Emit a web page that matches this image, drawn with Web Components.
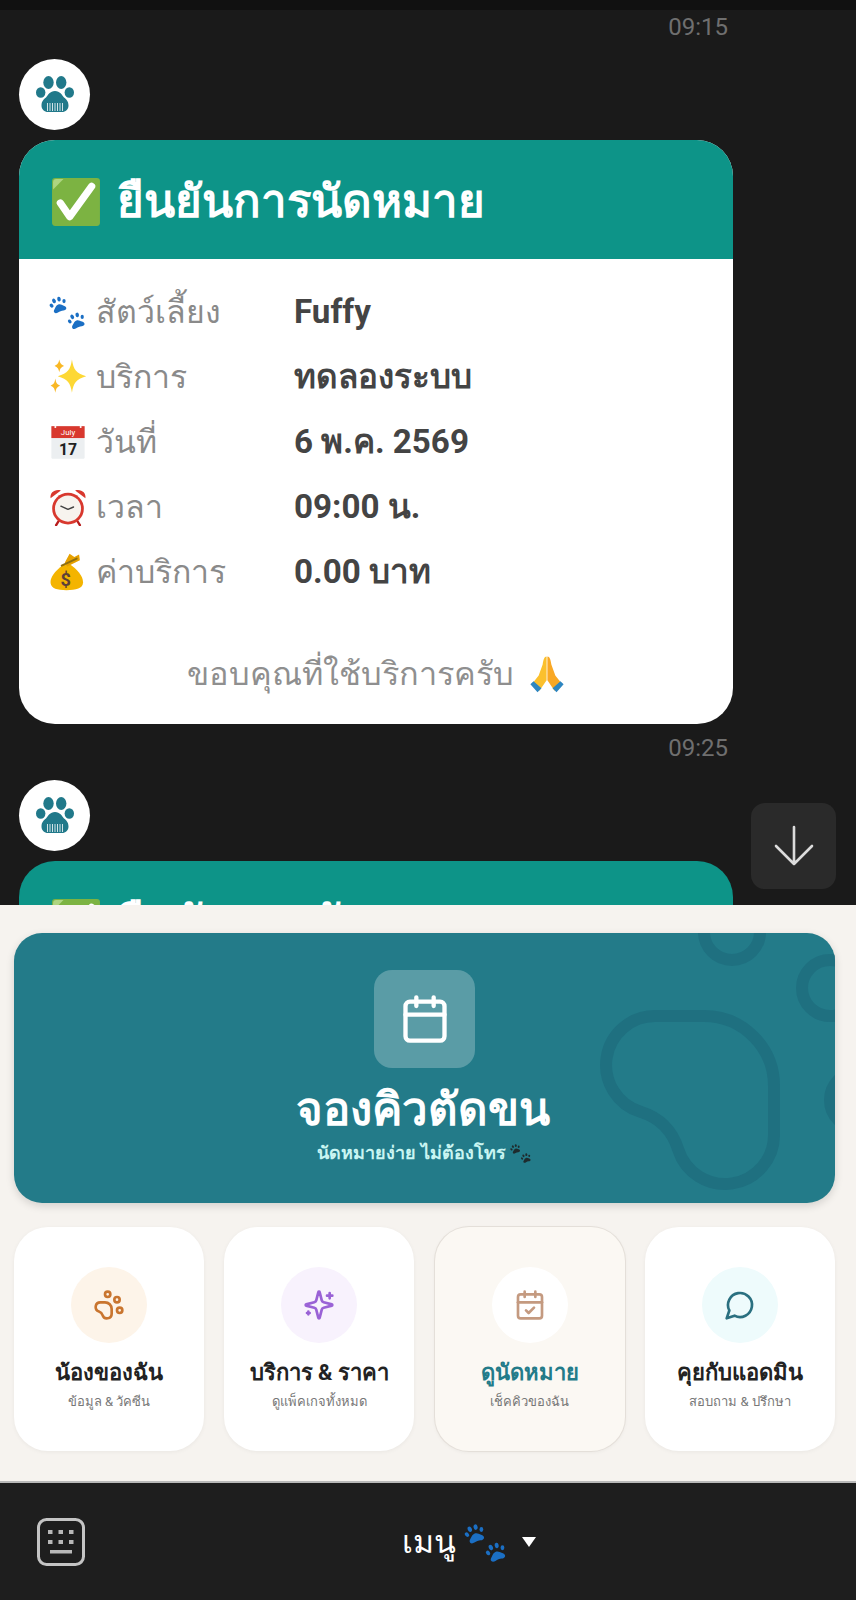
<!DOCTYPE html>
<html lang="th">
<head>
<meta charset="utf-8">
<title>แชท</title>
<style>
  html, body { margin: 0; padding: 0; background: #1a1a1a; }
  body { font-family: Roboto, "Noto Sans", "Noto Sans Thai", sans-serif; width: 856px; height: 1600px; overflow: hidden; }
</style>
</head>
<body>
<chat-screen>
  <chat-time>09:15</chat-time>
  <bot-avatar></bot-avatar>
  <confirm-card heading="ยืนยันการนัดหมาย" thanks="ขอบคุณที่ใช้บริการครับ">
    <info-row icon="paws" label="สัตว์เลี้ยง" value="Fuffy"></info-row>
    <info-row icon="sparkles" label="บริการ" value="ทดลองระบบ"></info-row>
    <info-row icon="calendar" label="วันที่" value="6 พ.ค. 2569"></info-row>
    <info-row icon="clock" label="เวลา" value="09:00 น."></info-row>
    <info-row icon="money" label="ค่าบริการ" value="0.00 บาท"></info-row>
  </confirm-card>
  <chat-time>09:25</chat-time>
  <bot-avatar></bot-avatar>
  <confirm-card heading="ยืนยันการนัดหมาย"></confirm-card>
</chat-screen>
<rich-menu>
  <booking-banner heading="จองคิวตัดขน" sub="นัดหมายง่าย ไม่ต้องโทร"></booking-banner>
  <tile-grid>
    <menu-tile icon="paw" tone="#c9752f" bubble="#fdf4e9" heading="น้องของฉัน" sub="ข้อมูล &amp; วัคซีน"></menu-tile>
    <menu-tile icon="sparkles" tone="#9a62d6" bubble="#f8f2fd" heading="บริการ &amp; ราคา" sub="ดูแพ็คเกจทั้งหมด"></menu-tile>
    <menu-tile active icon="check" tone="#c49a80" bubble="#ffffff" heading="ดูนัดหมาย" sub="เช็คคิวของฉัน"></menu-tile>
    <menu-tile icon="chat" tone="#2a7080" bubble="#eefbfc" heading="คุยกับแอดมิน" sub="สอบถาม &amp; ปรึกษา"></menu-tile>
  </tile-grid>
</rich-menu>
<chat-bar></chat-bar>

<script>
const PAW = `<path d="M13 13c3.500 0 5 2.500 7.500 4.500 2 1.500 3 3.200 2.300 5-.8 2-3.300 2.300-5.300 1.800-3-.8-6-.8-9 0-2 .5-4.500.2-5.300-1.800-.7-1.800.3-3.500 2.300-5C8 15.500 9.500 13 13 13z"/><ellipse cx="2.800" cy="11" rx="2.500" ry="3.300" transform="rotate(-20 2.800 11)"/><ellipse cx="8.800" cy="5.500" rx="2.700" ry="3.700" transform="rotate(-8 8.800 5.500)"/><ellipse cx="17" cy="5.500" rx="2.700" ry="3.700" transform="rotate(8 17 5.500)"/><ellipse cx="23.200" cy="11" rx="2.500" ry="3.300" transform="rotate(20 23.200 11)"/>`;

const EMOJI = {
  check: `<rect x="1" y="1" width="46" height="46" rx="3" fill="#7cb342"/><path d="M2 12V5a3 3 0 0 1 3-3h7z" fill="#aed581"/><path d="M9 25l9 13L39 9" fill="none" stroke="#fff" stroke-width="7" stroke-linecap="round" stroke-linejoin="round"/>`,
  paws: `<g fill="#1b6fc4"><g transform="translate(1 4) scale(.82) rotate(-20 13 13)">${PAW}</g><g transform="translate(24 24) scale(.82) rotate(-20 13 13)">${PAW}</g></g>`,
  sparkles: `<g fill="#fdd835"><path d="M29 2c2 13 5 17 18 21-13 4-16 8-18 21-2-13-5-17-18-21 13-4 16-8 18-21z"/><path d="M13 2c1 5 2 6 6 8-4 2-5 3-6 8-1-5-2-6-6-8 4-2 5-3 6-8z" fill="#f9b825"/><path d="M8 26c1 6 2 7 6 9-4 2-5 3-6 9-1-6-2-7-6-9 4-2 5-3 6-9z" fill="#f9b825"/></g>`,
  calendar: `<rect x="3" y="4" width="42" height="41" rx="1" fill="#eceff1"/><rect x="3" y="4" width="42" height="15" fill="#d8382e"/><circle cx="8" cy="5" r="1.300" fill="#fff"/><circle cx="40" cy="5" r="1.300" fill="#fff"/><text x="24" y="15" font-family="Roboto, sans-serif" font-size="10" fill="#fff" text-anchor="middle">July</text><text x="24" y="40" font-family="Roboto, sans-serif" font-size="20" font-weight="700" fill="#212121" text-anchor="middle">17</text>`,
  clock: `<path d="M2 13C1 6 7 1 15 3zM46 13c1-7-5-12-13-10z" fill="#d8382e"/><path d="M12 42l-3 5M36 42l3 5" stroke="#b71c1c" stroke-width="3" stroke-linecap="round"/><circle cx="24" cy="26" r="20" fill="#d8382e"/><circle cx="24" cy="26" r="16.500" fill="#f7f3ee"/><path d="M24 27l-9-4M24 27l7-3" stroke="#424242" stroke-width="1.800" stroke-linecap="round"/>`,
  money: `<path d="M18 15C7 23 1 31 2 38c1 7 8 9 20 9 12 0 21-2 21-10 0-8-8-17-17-23z" fill="#f4b400"/><path d="M20 12l6-11 6 4 6-3 1 7-16 8z" fill="#e6a100"/><path d="M16 16l19-9" stroke="#8d6e10" stroke-width="2.400" stroke-linecap="round"/><text x="21" y="42" font-family="Roboto, sans-serif" font-size="23" font-weight="700" fill="#5d4037" text-anchor="middle">$</text>`,
  pray: `<path d="M23.500 2c-3 0-4 4-5 10l-5 14-8 10 9 9 9-13z" fill="#fbc02d"/><path d="M24.500 2c3 0 4 4 5 10l5 14 8 10-9 9-9-13z" fill="#f9a825"/><path d="M3 37l4-4 10 9-5 5zM45 37l-4-4-10 9 5 5z" fill="#2e86c1"/>`
};

// colour pictures that the font set can't give; always a 48 unit box
class EmojiIcon extends HTMLElement {
  connectedCallback() {
    const size = this.getAttribute('size') || 40;
    this.attachShadow({mode: 'open'}).innerHTML = `
    <style>:host { display: inline-flex; flex: none; width: ${size}px; height: ${size}px; } svg { width: 100%; height: 100%; display: block; }</style>
    <svg viewBox="0 0 48 48">${EMOJI[this.getAttribute('name')] || ''}</svg>`;
  }
}
customElements.define('emoji-icon', EmojiIcon);

const LUCIDE = {
  calendar: `<path d="M8 2v4M16 2v4"/><rect x="3" y="4" width="18" height="18" rx="2"/><path d="M3 10h18"/>`,
  check: `<path d="M8 2v4M16 2v4"/><rect x="3" y="4" width="18" height="18" rx="2"/><path d="M3 10h18"/><path d="m9 16 2 2 4-4"/>`,
  paw: `<circle cx="11" cy="4" r="2"/><circle cx="18" cy="8" r="2"/><circle cx="20" cy="16" r="2"/><path d="M9 10a5 5 0 0 1 5 5v3.5a3.5 3.5 0 0 1-6.84 1.045Q6.52 17.48 4.46 16.84A3.5 3.5 0 0 1 5.5 10Z"/>`,
  sparkles: `<path d="M9.937 15.5A2 2 0 0 0 8.5 14.063l-6.135-1.582a.5.5 0 0 1 0-.962L8.5 9.936A2 2 0 0 0 9.937 8.5l1.582-6.135a.5.5 0 0 1 .963 0L14.063 8.5A2 2 0 0 0 15.5 9.937l6.135 1.581a.5.5 0 0 1 0 .964L15.5 14.063a2 2 0 0 0-1.437 1.437l-1.582 6.135a.5.5 0 0 1-.963 0z"/><path d="M20 3v4M22 5h-4M4 17v2M5 18H3"/>`,
  chat: `<path d="M7.900 20A9 9 0 1 0 4 16.100L2 22Z"/>`
};

class ChatScreen extends HTMLElement {
  constructor() {
    super();
    this.attachShadow({mode: 'open'}).innerHTML = `
    <style>
      :host { display: block; position: relative; height: 905px; overflow: hidden; background: #1a1a1a; border-top: 10px solid #111; box-sizing: border-box; }
      .list { display: flex; flex-direction: column; padding: 0 123px 0 19px; }
      .down { position: absolute; right: 20px; top: 793px; width: 85px; height: 86px; border-radius: 14px; background: #2a2a2a; display: flex; align-items: center; justify-content: center; }
      .down svg { width: 46px; height: 46px; fill: none; stroke: #dcdcdc; stroke-width: 2.600; stroke-linecap: round; stroke-linejoin: round; }
    </style>
    <div class="list"><slot></slot></div>
    <div class="down"><svg viewBox="0 0 46 46"><path d="M23 4v37M5 23l18 18 18-18"/></svg></div>`;
  }
}
customElements.define('chat-screen', ChatScreen);

class ChatTime extends HTMLElement {
  constructor() {
    super();
    this.attachShadow({mode: 'open'}).innerHTML = `
    <style>:host { display: block; text-align: right; font: 400 24px/32px Roboto, sans-serif; color: #6f6f6f; padding-top: 1px; margin-bottom: 16px; margin-right: 5px; }</style>
    <slot></slot>`;
  }
}
customElements.define('chat-time', ChatTime);

class BotAvatar extends HTMLElement {
  constructor() {
    super();
    this.attachShadow({mode: 'open'}).innerHTML = `
    <style>
      :host { display: flex; align-items: center; justify-content: center; width: 71px; height: 71px; border-radius: 50%; background: #fff; margin-bottom: 10px; }
      svg { width: 38px; height: 37px; fill: #21798a; }
    </style>
    <svg viewBox="0 0 38 37">
      <ellipse cx="12.500" cy="6.500" rx="5.200" ry="6.500"/><ellipse cx="25.200" cy="6.500" rx="5.200" ry="6.500"/>
      <ellipse cx="4.700" cy="16.500" rx="4.700" ry="5.300"/><ellipse cx="33.300" cy="16.500" rx="4.700" ry="5.300"/>
      <path d="M19 15c5 0 7 4 9 6.500 2 1.500 4.500 3.500 4.500 8 0 4-3 6.500-6.500 6.500H12c-3.500 0-6.500-2.500-6.500-6.500 0-4.500 2.500-6.500 4.500-8C12 19 14 15 19 15z"/>
      <path d="M11.500 27v8M14 27v8M16.500 27v8M19 27v8M21.500 27v8M24 27v8M26.500 27v8" stroke="#fff" stroke-width=".8"/>
    </svg>`;
  }
}
customElements.define('bot-avatar', BotAvatar);

class ConfirmCard extends HTMLElement {
  constructor() {
    super();
    this.attachShadow({mode: 'open'});
  }
  connectedCallback() {
    const thanks = this.getAttribute('thanks');
    this.shadowRoot.innerHTML = `
    <style>
      :host { display: block; width: 714px; border-radius: 36px; overflow: hidden; background: #fff; flex: none; margin-bottom: 7px; }
      .head { height: 119px; background: #0d9488; display: flex; align-items: center; gap: 16px; padding: 5px 0 0 32px; box-sizing: border-box; color: #fff; font: 700 45.600px/1.2 Roboto, "Noto Sans", sans-serif; }
      .rows { display: flex; flex-direction: column; padding: 20px 30px 0 30px; }
      .thanks { display: flex; align-items: center; justify-content: center; gap: 14px; padding: 50px 0 30px; color: #8f8f8f; font: 400 32.500px/40px Roboto, "Noto Sans", sans-serif; }
    </style>
    <div class="head"><emoji-icon name="check" size="50"></emoji-icon><span>${this.getAttribute('heading')}</span></div>
    ${thanks ? `<div class="rows"><slot></slot></div>
    <div class="thanks"><span>${thanks}</span><emoji-icon name="pray" size="38"></emoji-icon></div>` : ''}`;
  }
}
customElements.define('confirm-card', ConfirmCard);

class InfoRow extends HTMLElement {
  constructor() {
    super();
    this.attachShadow({mode: 'open'});
  }
  connectedCallback() {
    this.shadowRoot.innerHTML = `
    <style>
      :host { display: grid; grid-template-columns: 245px 1fr; align-items: center; height: 65px; }
      .label { display: flex; align-items: center; gap: 9px; color: #8a8a8a; font: 400 32px/40px Roboto, "Noto Sans", sans-serif; }
      .value { color: #444; font: 700 33.200px/40px Roboto, "Noto Sans", sans-serif; }
    </style>
    <div class="label"><emoji-icon name="${this.getAttribute('icon')}" size="38"></emoji-icon><span>${this.getAttribute('label')}</span></div>
    <div class="value">${this.getAttribute('value')}</div>`;
  }
}
customElements.define('info-row', InfoRow);

class RichMenu extends HTMLElement {
  constructor() {
    super();
    this.attachShadow({mode: 'open'}).innerHTML = `
    <style>:host { display: flex; flex-direction: column; height: 578px; box-sizing: border-box; padding: 28px 21px 0 14px; background: #f6f3ef; border-bottom: 2px solid #b9b9b9; }</style>
    <slot></slot>`;
  }
}
customElements.define('rich-menu', RichMenu);

class BookingBanner extends HTMLElement {
  constructor() {
    super();
    this.attachShadow({mode: 'open'});
  }
  connectedCallback() {
    this.shadowRoot.innerHTML = `
    <style>
      :host { display: flex; flex-direction: column; align-items: center; position: relative; overflow: hidden; height: 270px; border-radius: 28px; background: #237b89; box-shadow: 0 3px 8px rgba(0,0,0,.14); color: #fff; flex: none; }
      .bg { position: absolute; left: 0; top: 0; width: 821px; height: 270px; fill: none; stroke: #1f7080; }
      .box { position: relative; margin-top: 37px; width: 101px; height: 98px; border-radius: 18px; background: rgba(255,255,255,.25); display: flex; align-items: center; justify-content: center; }
      .box svg { width: 52px; height: 52px; fill: none; stroke: #fff; stroke-width: 2; stroke-linecap: round; stroke-linejoin: round; }
      h2 { position: relative; margin: 14px 4px 0 0; font: 700 45.500px/56px Roboto, "Noto Sans", sans-serif; }
      p { position: relative; margin: 2px 0 0; display: flex; align-items: center; gap: 4px; color: #c9f5f2; font: 700 18px/26px Roboto, "Noto Sans", sans-serif; }
      p emoji-icon { filter: brightness(.3) saturate(0); opacity: .85; }
    </style>
    <svg class="bg" viewBox="14 933 821 270"><g transform="translate(578 876) scale(14)" stroke-width=".86">${LUCIDE.paw}</g></svg>
    <div class="box"><svg viewBox="0 0 24 24">${LUCIDE.calendar}</svg></div>
    <h2>${this.getAttribute('heading')}</h2>
    <p><span>${this.getAttribute('sub')}</span><emoji-icon name="paws" size="22"></emoji-icon></p>`;
  }
}
customElements.define('booking-banner', BookingBanner);

class TileGrid extends HTMLElement {
  constructor() {
    super();
    this.attachShadow({mode: 'open'}).innerHTML = `
    <style>:host { display: grid; grid-template-columns: repeat(4, 190px); column-gap: 20.330px; margin-top: 24px; }</style>
    <slot></slot>`;
  }
}
customElements.define('tile-grid', TileGrid);

class MenuTile extends HTMLElement {
  constructor() {
    super();
    this.attachShadow({mode: 'open'});
  }
  connectedCallback() {
    const tone = this.getAttribute('tone');
    this.shadowRoot.innerHTML = `
    <style>
      :host { display: flex; flex-direction: column; align-items: center; height: 224px; box-sizing: border-box; padding-top: 40px; border-radius: 34px; background: #fff; box-shadow: 0 1px 4px rgba(0,0,0,.05); }
      :host([active]) { background: #fbf8f3; box-shadow: 0 0 0 1px #e4dfd9, 0 1px 4px rgba(0,0,0,.06); }
      .dot { width: 76px; height: 76px; border-radius: 50%; display: flex; align-items: center; justify-content: center; background: ${this.getAttribute('bubble')}; }
      svg { width: 32px; height: 32px; fill: none; stroke: ${tone}; stroke-width: 2; stroke-linecap: round; stroke-linejoin: round; }
      h3 { margin: 13px 0 0; font: 700 22px/34px Roboto, "Noto Sans", sans-serif; color: #222; white-space: nowrap; }
      :host([active]) h3 { color: #237b89; }
      p { margin: 2px 0 0; font: 400 13px/20px Roboto, "Noto Sans", sans-serif; color: #777; white-space: nowrap; }
    </style>
    <div class="dot"><svg viewBox="0 0 24 24">${LUCIDE[this.getAttribute('icon')]}</svg></div>
    <h3>${this.getAttribute('heading')}</h3>
    <p>${this.getAttribute('sub')}</p>`;
  }
}
customElements.define('menu-tile', MenuTile);

class ChatBar extends HTMLElement {
  constructor() {
    super();
    this.attachShadow({mode: 'open'}).innerHTML = `
    <style>
      :host { display: flex; align-items: center; position: relative; height: 117px; background: #1e1e1e; color: #fff; box-sizing: border-box; padding-left: 37px; }
      .kb { width: 48px; height: 48px; display: block; }
      .mid { flex: 1; display: flex; align-items: center; justify-content: center; gap: 8px; padding-right: 4px; font: 400 32px/44px Roboto, "Noto Sans", sans-serif; }
      .tri { width: 0; height: 0; border-left: 7px solid transparent; border-right: 7px solid transparent; border-top: 10px solid #fff; margin-left: 6px; }
    </style>
    <svg class="kb" viewBox="0 0 48 48">
      <rect x="1.500" y="1.500" width="45" height="45" rx="8" fill="none" stroke="#c4c4c4" stroke-width="3"/>
      <g fill="#b8b8b8"><rect x="11" y="12" width="4.500" height="4"/><rect x="21.500" y="12" width="4.500" height="4"/><rect x="32" y="12" width="4.500" height="4"/><rect x="11" y="22" width="4.500" height="4"/><rect x="21.500" y="22" width="4.500" height="4"/><rect x="32" y="22" width="4.500" height="4"/><rect x="13" y="32" width="22" height="3.500"/></g>
    </svg>
    <div class="mid"><span>เมนู</span><emoji-icon name="paws" size="44"></emoji-icon><span class="tri"></span></div>`;
  }
}
customElements.define('chat-bar', ChatBar);
</script>
</body>
</html>
